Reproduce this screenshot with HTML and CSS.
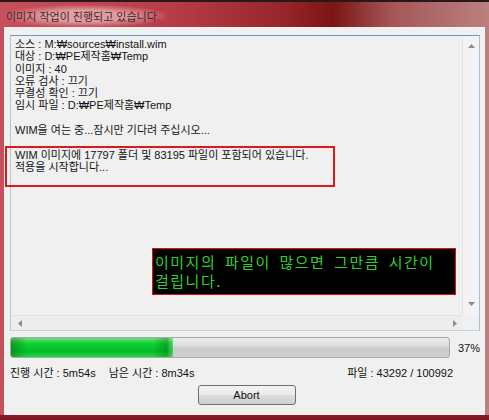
FILE: index.html
```html
<!DOCTYPE html>
<html lang="ko">
<head>
    <meta charset="UTF-8">
    <meta name="viewport" content="width=device-width, initial-scale=1.0">
    <title>이미지 작업</title>
    <link rel="stylesheet" href="styles.css">
</head>
<body>
    <div class="window">
        <div class="titlebar">
            <span class="title">이미지 작업이 진행되고 있습니다.</span>
        </div>

        <div class="client">
            <div class="logbox">
                <div class="log">
                    <div>소스 : M:₩sources₩install.wim</div>
                    <div>대상 : D:₩PE제작홈₩Temp</div>
                    <div>이미지 : 40</div>
                    <div>오류 검사 : 끄기</div>
                    <div>무결성 확인 : 끄기</div>
                    <div>임시 파일 : D:₩PE제작홈₩Temp</div>
                    <div>&nbsp;</div>
                    <div>WIM을 여는 중...잠시만 기다려 주십시오...</div>
                    <div>&nbsp;</div>
                    <div>WIM 이미지에 17797 폴더 및 83195 파일이 포함되어 있습니다.</div>
                    <div>적용을 시작합니다...</div>
                </div>
                <div class="vscroll">
                    <svg class="arrow" width="9" height="6" viewBox="0 0 9 6"><polygon points="4.5,1 8,5 1,5" fill="#8c8c8c"/></svg>
                    <svg class="arrow" width="9" height="6" viewBox="0 0 9 6"><polygon points="1,1 8,1 4.5,5" fill="#8c8c8c"/></svg>
                </div>
                <div class="hscroll">
                    <svg class="arrow" width="6" height="9" viewBox="0 0 6 9"><polygon points="1,4.5 5,1 5,8" fill="#8c8c8c"/></svg>
                    <svg class="arrow" width="6" height="9" viewBox="0 0 6 9"><polygon points="1,1 5,4.5 1,8" fill="#8c8c8c"/></svg>
                </div>
                <div class="corner"></div>
            </div>

            <div class="progress-row">
                <div class="progress">
                    <div class="progress-fill" style="width: 37%"></div>
                </div>
                <span class="percent">37%</span>
            </div>

            <div class="status-row">
                <div class="times">
                    <span>진행 시간 : 5m54s</span>
                    <span>남은 시간 : 8m34s</span>
                </div>
                <span>파일 : 43292 / 100992</span>
            </div>

            <div class="button-row">
                <button class="abort-button">Abort</button>
            </div>
        </div>

        <div class="mark-red"></div>
        <div class="note">이미지의 파일이 많으면 그만큼 시간이<br>걸립니다.</div>
    </div>
</body>
</html>
```

FILE: styles.css
```css
body {
    margin: 0;
    background-color: #1a1010;
    font-family: "Liberation Sans", "Noto Sans CJK KR", sans-serif;
    font-size: 11px;
    color: #111;
}
.window {
    position: relative;
    width: 489px;
    height: 420px;
    box-sizing: border-box;
    border-top: 2px solid #2a1818;
    background:
        linear-gradient(to top, #7c1420 0, #8c1a24 5px, transparent 5px),
        linear-gradient(90deg, #c6505c 0%, #b83c48 35%, #96262b 58%, #7c1414 68%, #a45656 80%, #bb8080 100%);
}
.titlebar {
    height: 25px;
    display: flex;
    align-items: center;
    padding-left: 5px;
}
.title {
    color: #3a2a2a;
    padding: 3px 6px 3px 1px;
    margin-top: 3px;
    background: radial-gradient(ellipse at center, rgba(250, 215, 215, 0.6) 35%, rgba(250, 215, 215, 0) 75%);
}
.client {
    margin: 0 4px;
    height: 388px;
    box-sizing: border-box;
    border: 1px solid rgba(255, 240, 240, 0.8);
    background-color: #f0f0f0;
    padding: 7px 4px 0 5px;
}
.logbox {
    height: 296px;
    box-sizing: border-box;
    border: 1px solid;
    border-color: #6f98c0 #a6bfd6 #c5d2de #b7c4d1;
    display: grid;
    grid-template-columns: 1fr 17px;
    grid-template-rows: 1fr 15px;
    background-color: #f0f0f0;
}
.log {
    padding: 2px 4px;
    line-height: 12.3px;
    color: #151515;
    overflow: hidden;
    white-space: nowrap;
}
.vscroll {
    background-color: #f3f3f3;
    border-left: 1px solid #e4e4e4;
    display: flex;
    flex-direction: column;
    justify-content: space-between;
    align-items: center;
    padding: 7px 0 8px;
}
.hscroll {
    background-color: #ededed;
    border-top: 1px solid #e2e2e2;
    display: flex;
    justify-content: space-between;
    align-items: center;
    padding: 0 4px 0 6px;
}
.corner {
    background-color: #f0f0f0;
}
.arrow {
    display: block;
}
.progress-row {
    display: flex;
    align-items: center;
    margin-top: 6px;
    height: 21px;
}
.progress {
    width: 442px;
    height: 21px;
    box-sizing: border-box;
    border: 1px solid #a9a9a9;
    border-radius: 3px;
    background: linear-gradient(#ececec, #dedede 40%, #cbcbcb 55%, #d2d2d2);
    overflow: hidden;
}
.progress-fill {
    height: 100%;
    background:
        linear-gradient(90deg, rgba(0, 70, 0, 0.35), rgba(0, 70, 0, 0) 10%, rgba(0, 70, 0, 0) 88%, rgba(0, 60, 0, 0.25) 96%, rgba(255, 255, 255, 0.25)),
        linear-gradient(#6be27a, #10cd33 30%, #00bf27 70%, #28d244);
}
.percent {
    margin-left: 8px;
}
.status-row {
    display: flex;
    justify-content: space-between;
    margin-top: 8px;
    padding-right: 27px;
    line-height: 14px;
}
.times {
    display: flex;
    gap: 13px;
}
.button-row {
    display: flex;
    justify-content: center;
    padding-left: 3px;
    margin-top: 5px;
}
.abort-button {
    width: 98px;
    height: 20px;
    border: 1px solid #707070;
    border-radius: 3px;
    background: linear-gradient(#f3f3f3, #ebebeb 48%, #dcdcdc 52%, #cfcfcf);
    font-family: "Liberation Sans", "Noto Sans CJK KR", sans-serif;
    font-size: 11px;
    color: #111;
    padding: 0;
}
.mark-red {
    position: absolute;
    left: 5px;
    top: 144px;
    width: 330px;
    height: 41px;
    box-sizing: border-box;
    border: 2px solid #e01818;
}
.note {
    position: absolute;
    left: 152px;
    top: 246px;
    width: 304px;
    height: 47px;
    box-sizing: border-box;
    border: 1px solid #e01010;
    background-color: #000;
    color: #2ed12e;
    font-family: "Noto Sans CJK KR", sans-serif;
    font-size: 15px;
    line-height: 19px;
    letter-spacing: 1.5px;
    word-spacing: 3px;
    padding: 3px 2px;
    white-space: nowrap;
}
```
